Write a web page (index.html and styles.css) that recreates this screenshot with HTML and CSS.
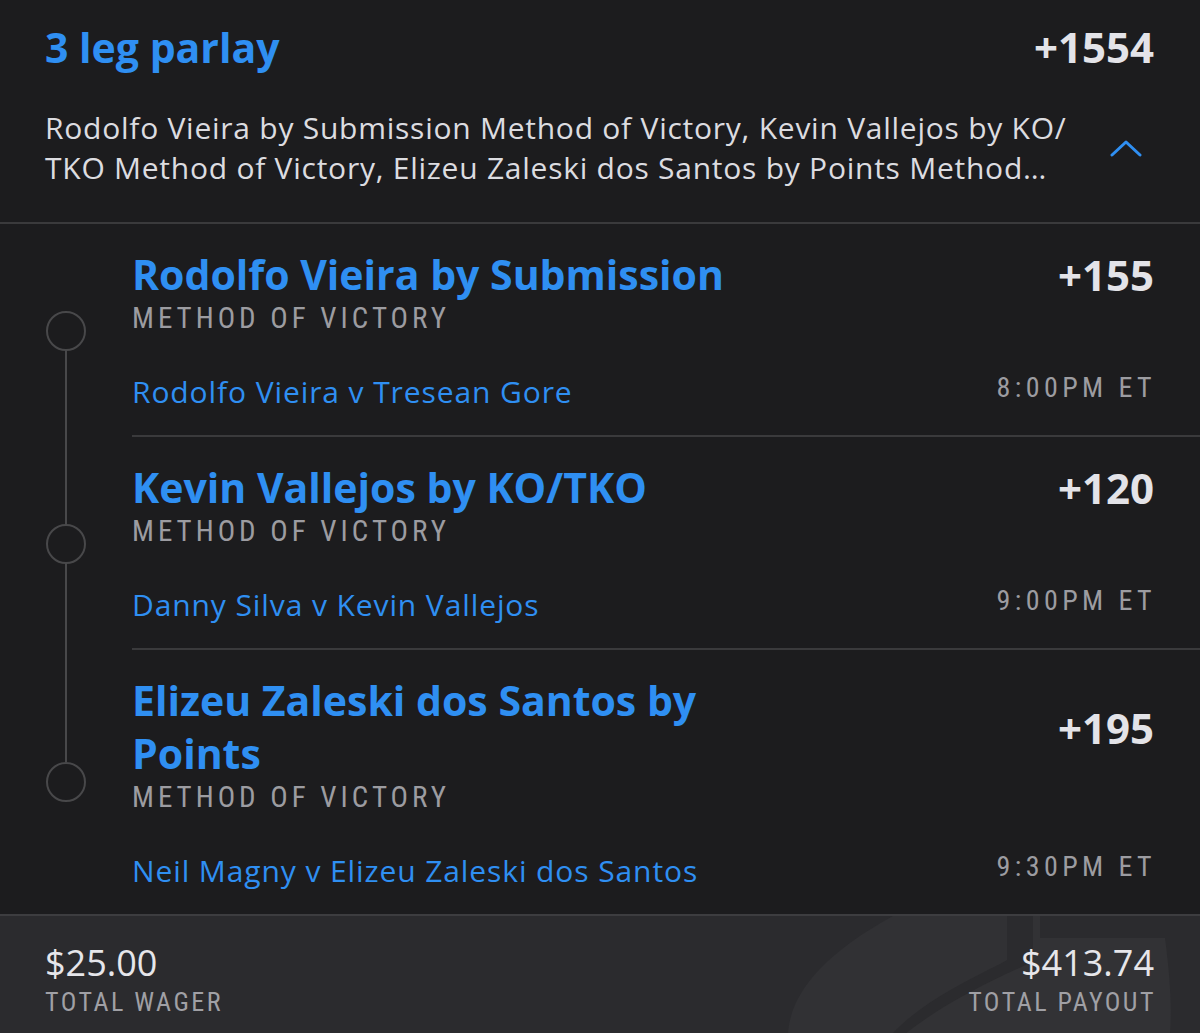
FILE: index.html
```html
<!DOCTYPE html>
<html lang="en">
<head>
<meta charset="utf-8">
<title>3 leg parlay</title>
<link rel="stylesheet" href="styles.css">
</head>
<body>
<div class="slip">
  <header class="header">
    <div class="header-top">
      <h1 class="parlay-title">3 leg parlay</h1>
      <div class="parlay-odds">+1554</div>
    </div>
    <div class="desc-row">
      <p class="desc">Rodolfo Vieira by Submission Method of Victory, Kevin Vallejos by KO/<br>TKO Method of Victory, Elizeu Zaleski dos Santos by Points Method…</p>
      <svg class="chevron" width="32" height="18" viewBox="0 0 32 18" aria-hidden="true"><path d="M2 16 L16 3 L30 16" fill="none" stroke="#2f8ff2" stroke-width="3" stroke-linecap="round" stroke-linejoin="round"/></svg>
    </div>
  </header>

  <section class="legs">
    <div class="leg leg-first">
      <div class="rail"><span class="rail-line"></span><span class="dot"></span><span class="rail-line"></span></div>
      <div class="leg-body">
        <div class="leg-head">
          <div class="leg-title">Rodolfo Vieira by Submission</div>
          <div class="leg-odds">+155</div>
        </div>
        <div class="market">METHOD OF VICTORY</div>
        <div class="leg-foot">
          <span class="match">Rodolfo Vieira v Tresean Gore</span>
          <span class="time">8:00PM ET</span>
        </div>
      </div>
    </div>

    <div class="leg">
      <div class="rail"><span class="rail-line"></span><span class="dot"></span><span class="rail-line"></span></div>
      <div class="leg-body">
        <div class="leg-head">
          <div class="leg-title">Kevin Vallejos by KO/TKO</div>
          <div class="leg-odds">+120</div>
        </div>
        <div class="market">METHOD OF VICTORY</div>
        <div class="leg-foot">
          <span class="match">Danny Silva v Kevin Vallejos</span>
          <span class="time">9:00PM ET</span>
        </div>
      </div>
    </div>

    <div class="leg leg-last">
      <div class="rail"><span class="rail-line"></span><span class="dot"></span><span class="rail-line"></span></div>
      <div class="leg-body">
        <div class="leg-head">
          <div class="leg-title">Elizeu Zaleski dos Santos by Points</div>
          <div class="leg-odds">+195</div>
        </div>
        <div class="market">METHOD OF VICTORY</div>
        <div class="leg-foot">
          <span class="match">Neil Magny v Elizeu Zaleski dos Santos</span>
          <span class="time">9:30PM ET</span>
        </div>
      </div>
    </div>
  </section>

  <footer class="footer">
    <svg class="watermark" width="1200" height="118" viewBox="0 0 1200 118" aria-hidden="true">
      <path d="M893 0 L1007 0 L1007 44 L1000 48 C960 68 920 88 892 118 L788 118 C790 80 820 40 893 0 Z" fill="#313134"/>
      <path d="M1033 0 L1040 0 L1040 22 L1165 22 C1170 60 1172 90 1170 118 L905 118 C940 90 990 64 1033 46 Z" fill="#323235"/>
    </svg>
    <div class="total">
      <div class="amount">$25.00</div>
      <div class="label">TOTAL WAGER</div>
    </div>
    <div class="total total-right">
      <div class="amount">$413.74</div>
      <div class="label">TOTAL PAYOUT</div>
    </div>
  </footer>
</div>
</body>
</html>
```

FILE: styles.css
```css
html, body {
  margin: 0;
  padding: 0;
  background: #1c1c1e;
}

body {
  font-family: "Open Sans", Lato, sans-serif;
  color: #e3e3e7;
}

.slip {
  width: 1200px;
  min-height: 1033px;
  display: flex;
  flex-direction: column;
}

/* Header */
.header {
  padding: 22px 46px 34px 45px;
  border-bottom: 2px solid #3a3a3c;
}

.header-top {
  display: flex;
  justify-content: space-between;
  align-items: center;
}

.parlay-title {
  margin: 0;
  font-size: 41px;
  line-height: 50px;
  font-weight: 700;
  color: #2f8ff2;
}

.parlay-odds {
  font-size: 42px;
  line-height: 50px;
  font-weight: 700;
  color: #e3e3e8;
}

.desc-row {
  display: flex;
  align-items: center;
  justify-content: space-between;
  margin-top: 36px;
}

.desc {
  margin: 0;
  font-size: 30px;
  line-height: 40px;
  letter-spacing: 0.75px;
  white-space: nowrap;
  color: #dcdce0;
}

.chevron {
  flex: none;
  margin-right: 12px;
}

/* Legs */
.legs {
  display: flex;
  flex-direction: column;
}

.leg {
  display: flex;
}

.rail {
  width: 132px;
  flex: none;
  display: flex;
  flex-direction: column;
  align-items: center;
}

.rail-line {
  flex: 1;
  width: 2px;
  background: #48484a;
}

.leg-first .rail-line:first-child,
.leg-last .rail-line:last-child {
  background: transparent;
}

.dot {
  flex: none;
  width: 36px;
  height: 36px;
  border: 2px solid #48484a;
  border-radius: 50%;
}

.leg-body {
  flex: 1;
  padding: 24px 46px 25px 0;
  border-bottom: 2px solid #3a3a3c;
}

.leg-last .leg-body {
  border-bottom: none;
}

.leg-head {
  display: flex;
  justify-content: space-between;
  align-items: center;
}

.leg-title {
  max-width: 640px;
  font-size: 41px;
  line-height: 53px;
  font-weight: 700;
  color: #2f8ff2;
}

.leg-odds {
  font-size: 42px;
  line-height: 53px;
  font-weight: 700;
  color: #e3e3e8;
}

.market {
  font-family: "Liberation Sans Narrow", "Roboto Condensed", Roboto, sans-serif;
  font-size: 29px;
  line-height: 34px;
  letter-spacing: 4px;
  color: #9c9ca1;
}

.leg-foot {
  display: flex;
  justify-content: space-between;
  align-items: center;
  margin-top: 39px;
}

.match {
  font-size: 30px;
  line-height: 36px;
  letter-spacing: 0.9px;
  color: #2f8ff2;
}

.time {
  font-family: "Liberation Sans Narrow", "Roboto Condensed", Roboto, sans-serif;
  font-size: 28px;
  line-height: 28px;
  letter-spacing: 4.4px;
  margin-right: -2px;
  margin-bottom: 8px;
  color: #9c9ca1;
}

/* Footer */
.footer {
  position: relative;
  flex: 1;
  display: flex;
  justify-content: space-between;
  padding: 27px 46px 16px 45px;
  background: #2b2b2e;
  border-top: 2px solid #3d3d40;
  overflow: hidden;
}

.watermark {
  position: absolute;
  left: 0;
  top: 0;
}

.total {
  position: relative;
}

.total-right {
  text-align: right;
}

.amount {
  font-size: 36px;
  line-height: 40px;
  color: #e6e6ea;
}

.label {
  margin-top: 3px;
  font-family: "Liberation Sans Narrow", "Roboto Condensed", Roboto, sans-serif;
  font-size: 26px;
  line-height: 32px;
  letter-spacing: 2.5px;
  margin-right: -2px;
  color: #a0a0a5;
}
```
